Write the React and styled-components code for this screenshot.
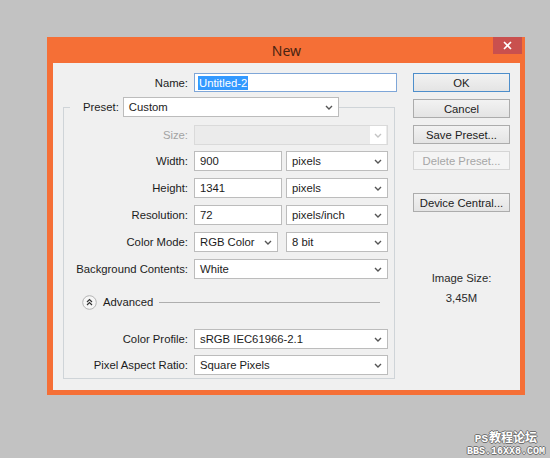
import React from 'react';
import styled, { createGlobalStyle } from 'styled-components';

const GlobalStyle = createGlobalStyle`
  html, body {
    margin: 0;
    padding: 0;
    background: #c2c2c2;
  }
  body {
    font-family: "Liberation Sans", Arial, sans-serif;
  }
`;

const Page = styled.div`
  position: relative;
  width: 550px;
  height: 458px;
  padding: 37px 0 0 47px;
  box-sizing: border-box;
  overflow: hidden;
`;

const Window = styled.div`
  width: 478px;
  background: #f56f36;
  padding: 0 5px 5px 6px;
  box-sizing: border-box;
  display: flex;
  flex-direction: column;
`;

const TitleBar = styled.div`
  position: relative;
  height: 26px;
  display: flex;
  align-items: center;
  justify-content: center;
  font-family: "Noto Sans", "Open Sans", sans-serif;
  font-size: 14px;
  color: #4a2412;
`;

const CloseButton = styled.div`
  position: absolute;
  top: 0;
  right: -2px;
  width: 29px;
  height: 17px;
  background: #c9504e;
  display: flex;
  align-items: center;
  justify-content: center;
`;

const Body = styled.div`
  background: #f0f0f0;
  display: flex;
  padding: 10px 9px 11px 10px;
  gap: 16px;
  font-size: 11.3px;
  color: #1c1c1c;
`;

const LeftColumn = styled.div`
  width: 334px;
  display: flex;
  flex-direction: column;
`;

const RightColumn = styled.div`
  width: 97px;
  display: flex;
  flex-direction: column;
`;

const Row = styled.div`
  display: grid;
  grid-template-columns: ${({ $label }) => $label || 124}px 1fr;
  column-gap: 6px;
  align-items: center;
  height: ${({ $h }) => $h || 20}px;
  margin-top: ${({ $mt }) => $mt || 0}px;
`;

const Label = styled.div`
  text-align: right;
  white-space: nowrap;
  color: ${({ $disabled }) => ($disabled ? '#a3a3a3' : '#1c1c1c')};
`;

const Fields = styled.div`
  display: flex;
  gap: ${({ $gap }) => $gap || 4}px;
  height: 100%;
`;

const Box = styled.div`
  box-sizing: border-box;
  height: 100%;
  width: ${({ $w }) => ($w ? `${$w}px` : 'auto')};
  flex: ${({ $w }) => ($w ? 'none' : 1)};
  background: ${({ $disabled }) => ($disabled ? '#ebebeb' : '#ffffff')};
  border: 1px solid ${({ $focus, $disabled }) => ($focus ? '#7ea6d8' : $disabled ? '#dadada' : '#bcbcbc')};
  display: flex;
  align-items: center;
  padding: 0 4px 0 5px;
  white-space: nowrap;
`;

const Value = styled.span`
  flex: 1;
`;

const Selected = styled.span`
  background: #3399ff;
  color: #ffffff;
  padding: 1px 1px;
  margin-left: -2px;
`;

const ArrowCell = styled.div`
  width: 16px;
  height: 100%;
  margin-right: -3px;
  display: flex;
  align-items: center;
  justify-content: center;
  background: ${({ $disabled }) => ($disabled ? '#ffffff' : 'transparent')};
`;

const GroupBox = styled.fieldset`
  margin: 5px 0 0 0;
  width: 332px;
  box-sizing: border-box;
  border: 1px solid #cfd4d8;
  padding: 8px 6px 3px 0;
  min-width: 0;
`;

const Legend = styled.legend`
  display: flex;
  align-items: center;
  gap: 4px;
  height: 20px;
  padding: 0 0 0 13px;
  margin-left: 6px;
`;

const LegendSelect = styled.div`
  width: 216px;
  height: 20px;
  display: flex;
`;

const AdvancedRow = styled.div`
  display: flex;
  align-items: center;
  gap: 6px;
  height: 16px;
  margin: 15px 8px 0 18px;
`;

const Divider = styled.div`
  flex: 1;
  height: 1px;
  background: #aeaeae;
`;

const Button = styled.div`
  box-sizing: border-box;
  height: 19px;
  margin-top: ${({ $mt }) => $mt || 0}px;
  display: flex;
  align-items: center;
  justify-content: center;
  border: 1px solid ${({ $default, $disabled }) => ($default ? '#4d8ecb' : $disabled ? '#d5d5d5' : '#acacac')};
  background: ${({ $disabled }) => ($disabled ? '#f4f4f4' : 'linear-gradient(#f2f2f2, #e4e4e4)')};
  color: ${({ $disabled }) => ($disabled ? '#a6a6a6' : '#1c1c1c')};
  white-space: nowrap;
`;

const InfoLabel = styled.div`
  text-align: center;
  margin-top: ${({ $mt }) => $mt || 0}px;
  color: #2a2a2a;
`;

const Watermark = styled.div`
  position: absolute;
  right: 5px;
  bottom: 0;
  display: flex;
  flex-direction: column;
  align-items: flex-end;
  font-family: "Liberation Mono", "Noto Sans CJK SC", monospace;
  font-weight: bold;
  color: #ffffff;
  text-shadow: 1px 0 0 #707070, -1px 0 0 #707070, 0 1px 0 #707070, 0 -1px 0 #707070;
`;

const WatermarkLine = styled.div`
  font-size: ${({ $size }) => $size}px;
  margin-right: ${({ $mr }) => $mr || 0}px;
  line-height: ${({ $lh }) => $lh}px;
`;

const Latin = styled.span`
  font-size: 11px;
  margin-right: 1px;
`;

const Chevron = ({ disabled }) => (
  <svg width="8" height="5" viewBox="0 0 8 5">
    <path d="M1 1 L4 4 L7 1" fill="none" stroke={disabled ? '#c4c4c4' : '#555'} strokeWidth="1.4" />
  </svg>
);

const Select = ({ value, w, disabled }) => (
  <Box $w={w} $disabled={disabled}>
    <Value>{value}</Value>
    <ArrowCell $disabled={disabled}>
      <Chevron disabled={disabled} />
    </ArrowCell>
  </Box>
);

const AdvancedIcon = () => (
  <svg width="15" height="15" viewBox="0 0 15 15">
    <circle cx="7.5" cy="7.5" r="6.8" fill="#f6f6f6" stroke="#b4b4b4" />
    <path d="M5 7 L7.5 4.6 L10 7 M5 10 L7.5 7.6 L10 10" fill="none" stroke="#333" strokeWidth="1.2" />
  </svg>
);

const FormRow = ({ label, disabled, children, mt, gap }) => (
  <Row $mt={mt}>
    <Label $disabled={disabled}>{label}</Label>
    <Fields $gap={gap}>{children}</Fields>
  </Row>
);

export default function App() {
  return (
    <Page>
      <GlobalStyle />
      <Window>
        <TitleBar>
          New
          <CloseButton>
            <svg width="9" height="9" viewBox="0 0 9 9">
              <path d="M1 1 L8 8 M8 1 L1 8" stroke="#ffffff" strokeWidth="1.6" />
            </svg>
          </CloseButton>
        </TitleBar>
        <Body>
          <LeftColumn>
            <Row $label={125} $h={19}>
              <Label>Name:</Label>
              <Fields>
                <Box $focus>
                  <Selected>Untitled-2</Selected>
                </Box>
              </Fields>
            </Row>

            <GroupBox>
              <Legend>
                <Label>Preset:</Label>
                <LegendSelect>
                  <Select value="Custom" />
                </LegendSelect>
              </Legend>

              <FormRow label="Size:" disabled>
                <Select value="" disabled />
              </FormRow>
              <FormRow label="Width:" mt={6}>
                <Box $w={88}>900</Box>
                <Select value="pixels" />
              </FormRow>
              <FormRow label="Height:" mt={7}>
                <Box $w={88}>1341</Box>
                <Select value="pixels" />
              </FormRow>
              <FormRow label="Resolution:" mt={7}>
                <Box $w={88}>72</Box>
                <Select value="pixels/inch" />
              </FormRow>
              <FormRow label="Color Mode:" mt={7} gap={8}>
                <Select value="RGB Color" w={84} />
                <Select value="8 bit" />
              </FormRow>
              <FormRow label="Background Contents:" mt={7}>
                <Select value="White" />
              </FormRow>

              <AdvancedRow>
                <AdvancedIcon />
                <span>Advanced</span>
                <Divider />
              </AdvancedRow>

              <FormRow label="Color Profile:" mt={19}>
                <Select value="sRGB IEC61966-2.1" />
              </FormRow>
              <FormRow label="Pixel Aspect Ratio:" mt={6}>
                <Select value="Square Pixels" />
              </FormRow>
            </GroupBox>
          </LeftColumn>

          <RightColumn>
            <Button $default>OK</Button>
            <Button $mt={7}>Cancel</Button>
            <Button $mt={7}>Save Preset...</Button>
            <Button $mt={7} $disabled>Delete Preset...</Button>
            <Button $mt={23}>Device Central...</Button>
            <InfoLabel $mt={60}>Image Size:</InfoLabel>
            <InfoLabel $mt={8}>3,45M</InfoLabel>
          </RightColumn>
        </Body>
      </Window>
      <Watermark>
        <WatermarkLine $size={12} $mr={8} $lh={13}>
          <Latin>PS</Latin>教程论坛
        </WatermarkLine>
        <WatermarkLine $size={10} $lh={12}>BBS.16XX8.COM</WatermarkLine>
      </Watermark>
    </Page>
  );
}
